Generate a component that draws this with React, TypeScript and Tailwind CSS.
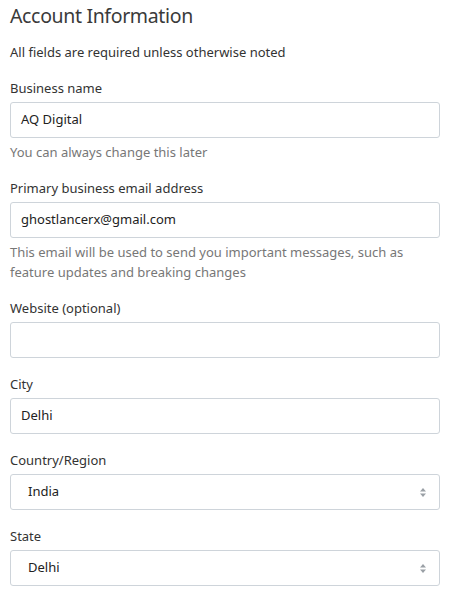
import React from "react";

const font = { fontFamily: '"Noto Sans", "Open Sans", sans-serif' };

function Chevrons() {
  return (
    <svg width="6" height="9" viewBox="0 0 6 9" className="shrink-0">
      <path d="M3 0 L6 3.5 L0 3.5 Z" fill="#9aa0a6" />
      <path d="M3 9 L6 5.5 L0 5.5 Z" fill="#9aa0a6" />
    </svg>
  );
}

function Field({
  label,
  value,
  help,
  select,
}: {
  label: string;
  value?: string;
  help?: React.ReactNode;
  select?: boolean;
}) {
  return (
    <div className="flex flex-col mb-4">
      <div className="text-[13px] leading-5 text-[#333]">{label}</div>
      <div
        className={`mt-1 h-9 w-[430px] rounded-[3px] border border-[#ced4da] bg-white flex items-center text-[13px] text-[#222] ${
          select ? "pl-[17px] pr-[13px] justify-between" : "px-[10px]"
        }`}
      >
        <span>{value}</span>
        {select && <Chevrons />}
      </div>
      {help && (
        <div className="mt-1 text-[13px] leading-5 text-[#777]">{help}</div>
      )}
    </div>
  );
}

export default function App() {
  return (
    <div className="w-[449px] h-[593px] bg-white pl-[10px] overflow-hidden" style={font}>
      <h1 className="text-[19.5px] leading-8 tracking-[-0.35px] text-[#3a3a3a] font-normal">Account Information</h1>
      <p className="mt-[10px] mb-4 text-[13px] leading-5 text-[#333]">
        All fields are required unless otherwise noted
      </p>
      <Field label="Business name" value="AQ Digital" help="You can always change this later" />
      <Field
        label="Primary business email address"
        value="ghostlancerx@gmail.com"
        help={
          <>
            This email will be used to send you important messages, such as
            <br />
            feature updates and breaking changes
          </>
        }
      />
      <Field label="Website (optional)" value="" />
      <Field label="City" value="Delhi" />
      <Field label="Country/Region" value="India" select />
      <Field label="State" value="Delhi" select />
    </div>
  );
}
